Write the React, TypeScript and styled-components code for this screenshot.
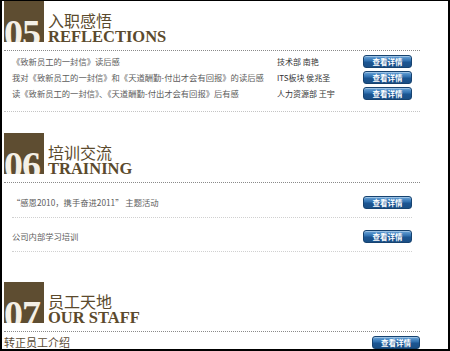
import styled, { createGlobalStyle } from "styled-components";

const GlobalStyle = createGlobalStyle`
  html, body {
    margin: 0;
    padding: 0;
    background: #fff;
  }
  body {
    font-family: "Noto Sans CJK SC", "Noto Sans", sans-serif;
  }
`;

const Frame = styled.div`
  box-sizing: border-box;
  width: 450px;
  height: 351px;
  border: 1px solid #000;
  border-left-width: 2px;
  border-right-width: 2px;
  border-bottom-width: 2px;
  padding-left: 2px;
  overflow: hidden;
  background: #fff;
`;

const Column = styled.div`
  width: 416px;
`;

const Section = styled.section<{ $top: number }>`
  margin-top: ${(p) => p.$top}px;
`;

const Header = styled.header`
  display: flex;
  align-items: flex-end;
  gap: 4px;
`;

const NumberBlock = styled.div`
  box-sizing: border-box;
  width: 40px;
  height: 41px;
  padding-top: 13px;
  background: #5e4d31;
  overflow: hidden;
  white-space: nowrap;
  font-family: "Liberation Serif", serif;
  font-weight: 700;
  font-size: 38px;
  line-height: 38px;
  letter-spacing: -1px;
  color: #f4f0e6;
`;

const Titles = styled.div`
  display: flex;
  flex-direction: column;
  margin-bottom: -3px;
  color: #5b4a2d;
`;

const CnTitle = styled.span`
  font-size: 16px;
  line-height: 15px;
`;

const EnTitle = styled.span`
  font-family: "Liberation Serif", serif;
  font-weight: 700;
  font-size: 16.5px;
  line-height: 17px;
`;

const HeadRule = styled.div`
  margin-top: 8px;
  border-top: 1px dotted #8a8a8a;
`;

const SectionRule = styled.div`
  margin-top: 10px;
  border-top: 1px dotted #c4c4c4;
`;

const ArticleList = styled.ul`
  list-style: none;
  margin: 0;
  padding: 2px 8px 0;
`;

const ArticleRow = styled.li`
  display: grid;
  grid-template-columns: 265px 86px 49px;
  align-items: center;
  height: 16px;
  font-size: 8.3px;
  color: #5c5c5c;
  white-space: nowrap;
`;

const Author = styled.span`
  font-size: 8px;
  color: #333;
`;

const TopicList = styled.ul`
  list-style: none;
  margin: 0;
  padding: 1px 8px 0;
`;

const TopicRow = styled.li`
  display: flex;
  justify-content: space-between;
  align-items: center;
  height: 16px;
  padding: 10px 0 7px;
  border-bottom: 1px dotted #d0d0d0;
  font-size: 8.3px;
  color: #5c5c5c;
`;

const StaffRow = styled.div`
  display: flex;
  justify-content: space-between;
  align-items: center;
  padding-top: 4px;
  font-size: 11px;
  line-height: 13px;
  color: #5b4c36;
`;

const DetailButton = styled.button<{ $wide?: boolean }>`
  box-sizing: border-box;
  width: ${(p) => (p.$wide ? 48 : 49)}px;
  height: 13px;
  padding: 0;
  border: 1px solid #174370;
  border-radius: 3px;
  background: linear-gradient(#6aa5da, #2f6fae 45%, #1c5693 55%, #1a4f86);
  box-shadow: inset 0 1px 0 rgba(255, 255, 255, 0.35);
  color: #fff;
  font-family: "Noto Sans CJK SC", sans-serif;
  font-size: 7.5px;
  font-weight: 700;
  line-height: 11px;
  text-align: center;
  cursor: pointer;
`;

const articles = [
  { title: "《致新员工的一封信》读后感", author: "技术部 南艳" },
  { title: "我对《致新员工的一封信》和《天道酬勤-付出才会有回报》的读后感", author: "ITS板块 侯兆圣" },
  { title: "读《致新员工的一封信》、《天道酬勤-付出才会有回报》后有感", author: "人力资源部 王宇" },
];

const topics = ["“感恩2010，携手奋进2011” 主题活动", "公司内部学习培训"];

const SectionHead = ({ num, cn, en }: { num: string; cn: string; en: string }) => (
  <Header>
    <NumberBlock>{num}</NumberBlock>
    <Titles>
      <CnTitle>{cn}</CnTitle>
      <EnTitle>{en}</EnTitle>
    </Titles>
  </Header>
);

export default function App() {
  return (
    <>
      <GlobalStyle />
      <Frame>
        <Column>
          <Section $top={0}>
            <SectionHead num="05" cn="入职感悟" en="REFLECTIONS" />
            <HeadRule />
            <ArticleList>
              {articles.map((a) => (
                <ArticleRow key={a.title}>
                  <span>{a.title}</span>
                  <Author>{a.author}</Author>
                  <DetailButton>查看详情</DetailButton>
                </ArticleRow>
              ))}
            </ArticleList>
            <SectionRule />
          </Section>

          <Section $top={21}>
            <SectionHead num="06" cn="培训交流" en="TRAINING" />
            <HeadRule />
            <TopicList>
              {topics.map((t) => (
                <TopicRow key={t}>
                  <span>{t}</span>
                  <DetailButton>查看详情</DetailButton>
                </TopicRow>
              ))}
            </TopicList>
          </Section>

          <Section $top={30}>
            <SectionHead num="07" cn="员工天地" en="OUR STAFF" />
            <HeadRule />
            <StaffRow>
              <span>转正员工介绍</span>
              <DetailButton $wide>查看详情</DetailButton>
            </StaffRow>
          </Section>
        </Column>
      </Frame>
    </>
  );
}
